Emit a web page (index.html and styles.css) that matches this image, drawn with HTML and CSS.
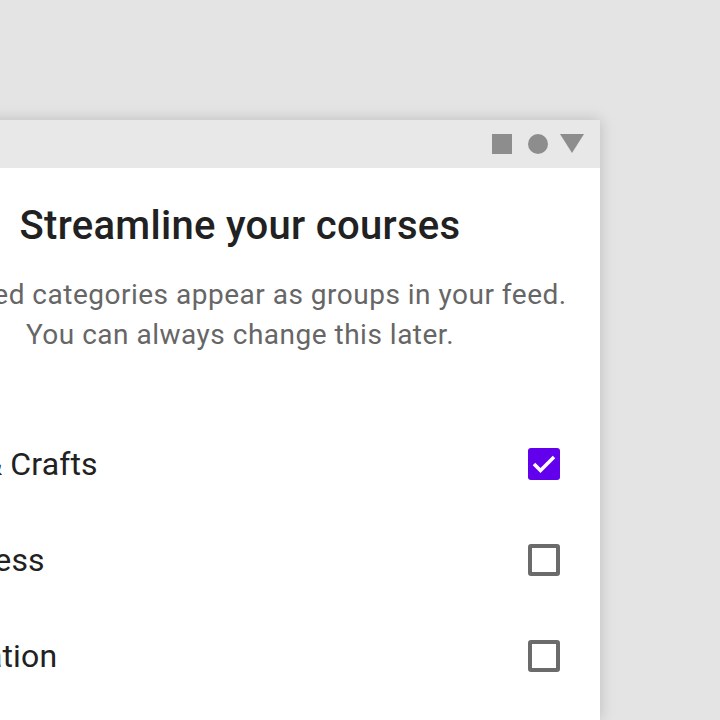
FILE: index.html
```html
<!DOCTYPE html>
<html lang="en">
<head>
  <meta charset="UTF-8" />
  <title>Streamline your courses</title>
  <link rel="stylesheet" href="styles.css">
</head>
<body>

  <div class="phone">
    <div class="status-bar">
      <span class="icon-square"></span>
      <span class="icon-circle"></span>
      <svg class="icon-triangle" width="24" height="20" viewBox="0 0 24 20">
        <polygon points="0,0 24,0 12,19" fill="#8d8d8d" />
      </svg>
    </div>

    <div class="content">
      <h1 class="title">Streamline your courses</h1>
      <p class="subtitle">Selected categories appear as groups in your feed.<br>You can always change this later.</p>

      <ul class="category-list">
        <li class="category">
          <span class="category-name">Arts &amp; Crafts</span>
          <span class="checkbox checked">
            <svg width="32" height="32" viewBox="0 0 32 32">
              <polyline points="6,16 12.5,22.5 26,9" fill="none" stroke="#fff" stroke-width="3.5" />
            </svg>
          </span>
        </li>
        <li class="category">
          <span class="category-name">Business</span>
          <span class="checkbox"></span>
        </li>
        <li class="category">
          <span class="category-name">Education</span>
          <span class="checkbox"></span>
        </li>
      </ul>
    </div>
  </div>

</body>
</html>
```

FILE: styles.css
```css
body {
  margin: 0;
  height: 720px;
  overflow: hidden;
  background: #e4e4e4;
  font-family: Roboto, "Liberation Sans", sans-serif;
}

.phone {
  width: 720px;
  height: 600px;
  margin-top: 120px;
  margin-left: -120px;
  background: #fff;
  box-shadow: 0 0 14px rgba(0, 0, 0, 0.18);
}

.status-bar {
  height: 48px;
  background: #e8e8e8;
  display: flex;
  justify-content: flex-end;
  align-items: center;
  padding-right: 16px;
}

.icon-square {
  width: 20px;
  height: 20px;
  background: #8d8d8d;
}

.icon-circle {
  width: 20px;
  height: 20px;
  border-radius: 50%;
  background: #8d8d8d;
  margin-left: 16px;
}

.icon-triangle {
  margin-left: 12px;
}

.content {
  padding: 0 40px;
}

.title {
  margin: 34px 0 0;
  font-size: 40px;
  font-weight: 500;
  line-height: 48px;
  letter-spacing: 0.3px;
  color: #212121;
  text-align: center;
}

.subtitle {
  margin: 25px -20px 0;
  font-size: 28px;
  line-height: 40px;
  letter-spacing: 0.5px;
  color: #666;
  text-align: center;
  white-space: nowrap;
}

.category-list {
  list-style: none;
  margin: 61px 0 0 -6px;
  padding: 0;
}

.category {
  height: 96px;
  display: flex;
  align-items: center;
  justify-content: space-between;
}

.category-name {
  font-size: 32px;
  letter-spacing: 0.15px;
  color: #212121;
}

.checkbox {
  width: 32px;
  height: 32px;
  box-sizing: border-box;
  border: 4px solid #6b6b6b;
  border-radius: 3px;
  display: flex;
  align-items: center;
  justify-content: center;
}

.checkbox.checked {
  border: none;
  background: #6200ee;
}
```
